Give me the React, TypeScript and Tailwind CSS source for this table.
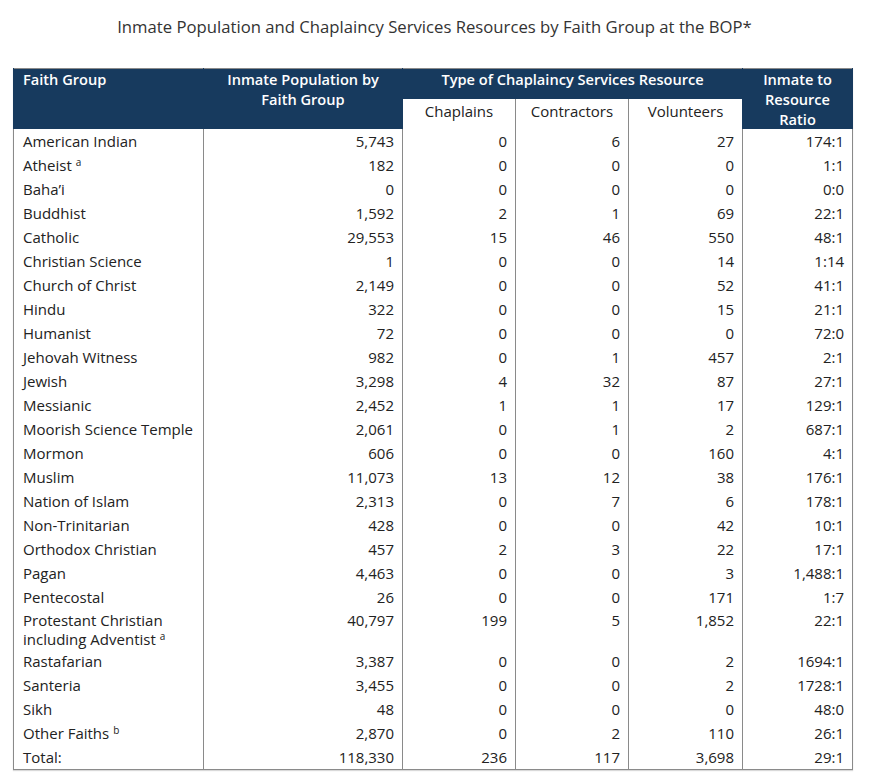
type Row = {
  name: string
  sup?: string
  pop: string
  chaplains: string
  contractors: string
  volunteers: string
  ratio: string
  twoLine?: boolean
}

const rows: Row[] = [
  { name: 'American Indian', pop: '5,743', chaplains: '0', contractors: '6', volunteers: '27', ratio: '174:1' },
  { name: 'Atheist', sup: 'a', pop: '182', chaplains: '0', contractors: '0', volunteers: '0', ratio: '1:1' },
  { name: 'Baha’i', pop: '0', chaplains: '0', contractors: '0', volunteers: '0', ratio: '0:0' },
  { name: 'Buddhist', pop: '1,592', chaplains: '2', contractors: '1', volunteers: '69', ratio: '22:1' },
  { name: 'Catholic', pop: '29,553', chaplains: '15', contractors: '46', volunteers: '550', ratio: '48:1' },
  { name: 'Christian Science', pop: '1', chaplains: '0', contractors: '0', volunteers: '14', ratio: '1:14' },
  { name: 'Church of Christ', pop: '2,149', chaplains: '0', contractors: '0', volunteers: '52', ratio: '41:1' },
  { name: 'Hindu', pop: '322', chaplains: '0', contractors: '0', volunteers: '15', ratio: '21:1' },
  { name: 'Humanist', pop: '72', chaplains: '0', contractors: '0', volunteers: '0', ratio: '72:0' },
  { name: 'Jehovah Witness', pop: '982', chaplains: '0', contractors: '1', volunteers: '457', ratio: '2:1' },
  { name: 'Jewish', pop: '3,298', chaplains: '4', contractors: '32', volunteers: '87', ratio: '27:1' },
  { name: 'Messianic', pop: '2,452', chaplains: '1', contractors: '1', volunteers: '17', ratio: '129:1' },
  { name: 'Moorish Science Temple', pop: '2,061', chaplains: '0', contractors: '1', volunteers: '2', ratio: '687:1' },
  { name: 'Mormon', pop: '606', chaplains: '0', contractors: '0', volunteers: '160', ratio: '4:1' },
  { name: 'Muslim', pop: '11,073', chaplains: '13', contractors: '12', volunteers: '38', ratio: '176:1' },
  { name: 'Nation of Islam', pop: '2,313', chaplains: '0', contractors: '7', volunteers: '6', ratio: '178:1' },
  { name: 'Non-Trinitarian', pop: '428', chaplains: '0', contractors: '0', volunteers: '42', ratio: '10:1' },
  { name: 'Orthodox Christian', pop: '457', chaplains: '2', contractors: '3', volunteers: '22', ratio: '17:1' },
  { name: 'Pagan', pop: '4,463', chaplains: '0', contractors: '0', volunteers: '3', ratio: '1,488:1' },
  { name: 'Pentecostal', pop: '26', chaplains: '0', contractors: '0', volunteers: '171', ratio: '1:7' },
  {
    name: 'Protestant Christian including Adventist',
    sup: 'a',
    pop: '40,797',
    chaplains: '199',
    contractors: '5',
    volunteers: '1,852',
    ratio: '22:1',
    twoLine: true,
  },
  { name: 'Rastafarian', pop: '3,387', chaplains: '0', contractors: '0', volunteers: '2', ratio: '1694:1' },
  { name: 'Santeria', pop: '3,455', chaplains: '0', contractors: '0', volunteers: '2', ratio: '1728:1' },
  { name: 'Sikh', pop: '48', chaplains: '0', contractors: '0', volunteers: '0', ratio: '48:0' },
  { name: 'Other Faiths', sup: 'b', pop: '2,870', chaplains: '0', contractors: '2', volunteers: '110', ratio: '26:1' },
  { name: 'Total:', pop: '118,330', chaplains: '236', contractors: '117', volunteers: '3,698', ratio: '29:1' },
]

const head = 'bg-[#173a5e] text-white font-semibold text-[14.6px] align-top border-x border-[#173a5e] leading-[20px]'
const sub = 'bg-white text-[#222] font-normal border-x border-[#8a8a8a] text-center align-top pt-[2px] leading-[20px]'

function Cell({ children, twoLine, left }: { children: React.ReactNode; twoLine?: boolean; left?: boolean }) {
  return (
    <td
      className={`border-x border-[#8a8a8a] align-top ${left ? 'text-left pl-[9px] pr-1' : 'text-right pr-[8px]'} ${
        twoLine ? 'h-[40px] pt-[2px] pb-0 leading-[19px]' : 'h-[24px] py-[2px] leading-[20px]'
      }`}
    >
      {children}
    </td>
  )
}

export default function App() {
  return (
    <div className="bg-white w-[869px] min-h-[782px] font-['Open_Sans',sans-serif] text-[#222]">
      <h1 className="pt-[16px] text-center text-[16.7px] leading-[22px] text-[#333] font-normal">
        Inmate Population and Chaplaincy Services Resources by Faith Group at the BOP*
      </h1>
      <table className="mt-[30px] ml-[13px] w-[839px] table-fixed border-collapse border border-[#8a8a8a] text-[15px] shadow-[0_1px_1px_rgba(0,0,0,0.15)]">
        <colgroup>
          <col className="w-[190px]" />
          <col className="w-[199px]" />
          <col className="w-[113px]" />
          <col className="w-[113px]" />
          <col className="w-[114px]" />
          <col className="w-[110px]" />
        </colgroup>
        <thead>
          <tr className="h-[29px]">
            <th rowSpan={2} className={`${head} text-left pl-[9px] pt-0`}>
              Faith Group
            </th>
            <th rowSpan={2} className={`${head} text-center pt-0 px-4`}>
              Inmate Population by Faith Group
            </th>
            <th colSpan={3} className={`${head} text-center pt-0`}>
              Type of Chaplaincy Services Resource
            </th>
            <th rowSpan={2} className={`${head} text-center pt-0 px-2 leading-[19.5px]`}>
              Inmate to Resource Ratio
            </th>
          </tr>
          <tr className="h-[29px]">
            <th className={sub}>Chaplains</th>
            <th className={sub}>Contractors</th>
            <th className={sub}>Volunteers</th>
          </tr>
        </thead>
        <tbody>
          {rows.map((r) => (
            <tr key={r.name}>
              <Cell left twoLine={r.twoLine}>
                {r.twoLine ? (
                  <>
                    Protestant Christian
                    <br />
                    including Adventist
                  </>
                ) : (
                  r.name
                )}
                {r.sup && (
                  <span className="relative -top-[5px] ml-[4px] inline-block text-[10px] leading-none">{r.sup}</span>
                )}
              </Cell>
              <Cell twoLine={r.twoLine}>{r.pop}</Cell>
              <Cell twoLine={r.twoLine}>{r.chaplains}</Cell>
              <Cell twoLine={r.twoLine}>{r.contractors}</Cell>
              <Cell twoLine={r.twoLine}>{r.volunteers}</Cell>
              <Cell twoLine={r.twoLine}>{r.ratio}</Cell>
            </tr>
          ))}
        </tbody>
      </table>
    </div>
  )
}
